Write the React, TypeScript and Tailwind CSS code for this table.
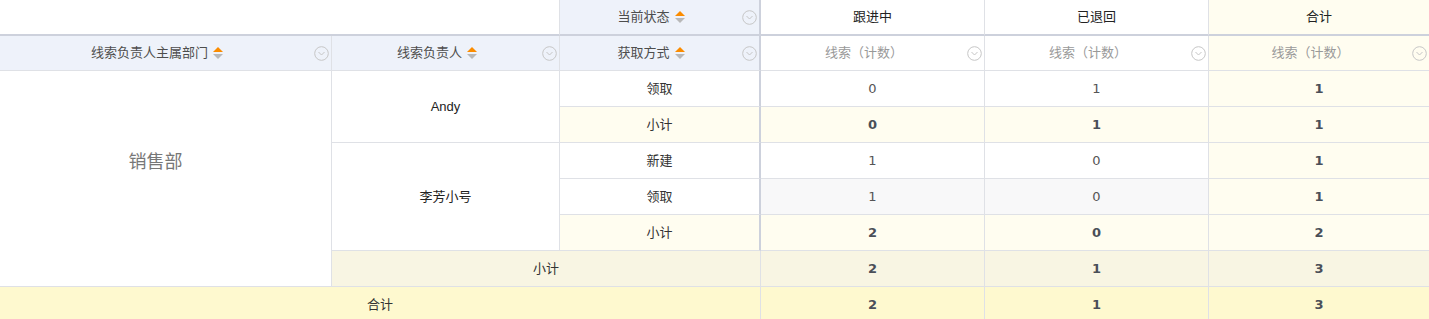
import React from 'react';

const cell = 'flex items-center justify-center border-r border-b border-[#dfe1e6]';
const thickR = 'border-r-2 border-r-[#cdd1dc]';
const num = "font-['DejaVu_Sans','Noto_Sans_CJK_SC',sans-serif] text-[13px]";

const rowStart: Record<number, string> = {
  3: 'row-start-3',
  4: 'row-start-4',
  5: 'row-start-5',
  6: 'row-start-6',
  7: 'row-start-7',
  8: 'row-start-8',
  9: 'row-start-9',
};

function SortIcon() {
  return (
    <svg width="10" height="12" viewBox="0 0 10 12" className="shrink-0">
      <path d="M0 5L5 0L10 5Z" fill="#fb8c00" />
      <path d="M0 7L10 7L5 12Z" fill="#b8b8b8" />
    </svg>
  );
}

function CircleIcon() {
  return (
    <svg width="15" height="15" viewBox="0 0 15 15" className="shrink-0 mr-[2px]">
      <circle cx="7.5" cy="7.5" r="6.8" fill="none" stroke="#c6c6c6" strokeWidth="1" />
      <path d="M4.5 6L7.5 9L10.5 6" fill="none" stroke="#c6c6c6" strokeWidth="1" />
    </svg>
  );
}

function HeadLabel({ text, sort, color }: { text: string; sort?: boolean; color: string }) {
  return (
    <>
      <div className={`flex-1 flex items-center justify-center gap-[5px] ${color}`}>
        <span>{text}</span>
        {sort && <SortIcon />}
      </div>
      <CircleIcon />
    </>
  );
}

const rows = [
  { r: 3, label: '领取', sub: false, hover: false, vals: [0, 1, 1] },
  { r: 4, label: '小计', sub: true, hover: false, vals: [0, 1, 1] },
  { r: 5, label: '新建', sub: false, hover: false, vals: [1, 0, 1] },
  { r: 6, label: '领取', sub: false, hover: true, vals: [1, 0, 1] },
  { r: 7, label: '小计', sub: true, hover: false, vals: [2, 0, 2] },
];

export default function App() {
  return (
    <div className="w-[1429px] h-[319px] overflow-hidden bg-white font-['Liberation_Sans','Noto_Sans_CJK_SC',sans-serif] text-[13px] text-[#333]">
      <div className="grid grid-cols-[332px_228px_201px_224px_224px_1fr] grid-rows-[36px_35px_36px_36px_36px_36px_36px_36px_36px]">
        {/* header row 1 */}
        <div className="col-start-1 col-span-2 row-start-1 border-r border-[#dfe1e6] border-b-2 border-b-[#cdd1dc]" />
        <div className={`col-start-3 row-start-1 flex items-center bg-[#eef2fa] border-b-2 border-b-[#cdd1dc] ${thickR}`}>
          <HeadLabel text="当前状态" sort color="text-[#4d4d4d]" />
        </div>
        <div className="col-start-4 row-start-1 flex items-center justify-center border-r border-[#dfe1e6] border-b-2 border-b-[#cdd1dc] text-[#222]">
          跟进中
        </div>
        <div className="col-start-5 row-start-1 flex items-center justify-center border-r border-[#dfe1e6] border-b-2 border-b-[#cdd1dc] text-[#222]">
          已退回
        </div>
        <div className="col-start-6 row-start-1 flex items-center justify-center bg-[#fffdf0] border-b-2 border-b-[#cdd1dc] text-[#222]">
          合计
        </div>

        {/* header row 2 */}
        <div className="col-start-1 row-start-2 flex items-center bg-[#eef2fa] border-r border-b border-[#dfe1e6]">
          <HeadLabel text="线索负责人主属部门" sort color="text-[#4d4d4d]" />
        </div>
        <div className="col-start-2 row-start-2 flex items-center bg-[#eef2fa] border-r border-b border-[#dfe1e6]">
          <HeadLabel text="线索负责人" sort color="text-[#4d4d4d]" />
        </div>
        <div className={`col-start-3 row-start-2 flex items-center bg-[#eef2fa] border-b border-[#dfe1e6] ${thickR}`}>
          <HeadLabel text="获取方式" sort color="text-[#4d4d4d]" />
        </div>
        <div className="col-start-4 row-start-2 flex items-center border-r border-b border-[#dfe1e6]">
          <HeadLabel text="线索（计数）" color="text-[#999]" />
        </div>
        <div className="col-start-5 row-start-2 flex items-center border-r border-b border-[#dfe1e6]">
          <HeadLabel text="线索（计数）" color="text-[#999]" />
        </div>
        <div className="col-start-6 row-start-2 flex items-center bg-[#fffdf0] border-b border-[#dfe1e6]">
          <HeadLabel text="线索（计数）" color="text-[#999]" />
        </div>

        {/* row groups */}
        <div className={`${cell} col-start-1 row-start-3 row-span-6 pr-[20px] pb-[32px] text-[18px] text-[#777]`}>
          销售部
        </div>
        <div className={`${cell} col-start-2 row-start-3 row-span-2 text-[#222]`}>Andy</div>
        <div className={`${cell} col-start-2 row-start-5 row-span-3 text-[#222]`}>李芳小号</div>

        {rows.map((row) => (
          <React.Fragment key={row.r}>
            <div
              className={`${cell} ${thickR} col-start-3 ${rowStart[row.r]} ${row.sub ? 'bg-[#fffdf0]' : 'bg-white'} text-[#333]`}
            >
              {row.label}
            </div>
            {row.vals.map((v, i) => {
              const last = i === 2;
              const bg = row.sub || last ? 'bg-[#fffdf0]' : row.hover ? 'bg-[#f8f8f9]' : 'bg-white';
              const weight = row.sub || last ? 'font-bold text-[#4a4f58]' : 'text-[#555]';
              const colCls = i === 0 ? 'col-start-4' : i === 1 ? 'col-start-5' : 'col-start-6 border-r-0';
              return (
                <div key={i} className={`${cell} ${colCls} ${rowStart[row.r]} ${bg} ${num} ${weight}`}>
                  {v}
                </div>
              );
            })}
          </React.Fragment>
        ))}

        {/* subtotal */}
        <div className={`${cell} col-start-2 col-span-2 row-start-8 bg-[#f8f5e3] text-[#333]`}>小计</div>
        {[2, 1, 3].map((v, i) => (
          <div
            key={i}
            className={`${cell} ${i === 0 ? 'col-start-4' : i === 1 ? 'col-start-5' : 'col-start-6 border-r-0'} row-start-8 bg-[#f8f5e3] ${num} font-bold text-[#4a4f58]`}
          >
            {v}
          </div>
        ))}

        {/* total */}
        <div className={`${cell} col-start-1 col-span-3 row-start-9 bg-[#fef9cf] text-[#333]`}>合计</div>
        {[2, 1, 3].map((v, i) => (
          <div
            key={i}
            className={`${cell} ${i === 0 ? 'col-start-4' : i === 1 ? 'col-start-5' : 'col-start-6 border-r-0'} row-start-9 bg-[#fef9cf] ${num} font-bold text-[#4a4f58]`}
          >
            {v}
          </div>
        ))}
      </div>
    </div>
  );
}
